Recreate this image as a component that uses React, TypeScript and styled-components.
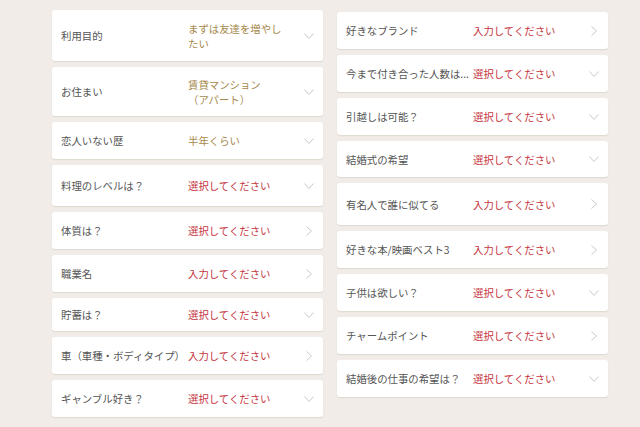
import styled, { createGlobalStyle } from 'styled-components';

type Kind = 'select' | 'input';

interface Item {
  label: string;
  value: React.ReactNode;
  filled?: boolean;
  kind: Kind;
  height: number;
}

const leftItems: Item[] = [
  { label: '利用目的', value: 'まずは友達を増やしたい', filled: true, kind: 'select', height: 51 },
  {
    label: 'お住まい',
    value: (
      <>
        賃貸マンション
        <br />
        （アパート）
      </>
    ),
    filled: true,
    kind: 'select',
    height: 49,
  },
  { label: '恋人いない歴', value: '半年くらい', filled: true, kind: 'select', height: 37 },
  { label: '料理のレベルは？', value: '選択してください', kind: 'select', height: 41 },
  { label: '体質は？', value: '選択してください', kind: 'input', height: 37 },
  { label: '職業名', value: '入力してください', kind: 'input', height: 37 },
  { label: '貯蓄は？', value: '選択してください', kind: 'select', height: 33 },
  { label: '車（車種・ボディタイプ）', value: '入力してください', kind: 'input', height: 37 },
  { label: 'ギャンブル好き？', value: '選択してください', kind: 'select', height: 37 },
];

const rightItems: Item[] = [
  { label: '好きなブランド', value: '入力してください', kind: 'input', height: 37 },
  { label: '今まで付き合った人数は...', value: '選択してください', kind: 'select', height: 37 },
  { label: '引越しは可能？', value: '選択してください', kind: 'select', height: 37 },
  { label: '結婚式の希望', value: '選択してください', kind: 'select', height: 36 },
  { label: '有名人で誰に似てる', value: '入力してください', kind: 'input', height: 42 },
  { label: '好きな本/映画ベスト3', value: '入力してください', kind: 'input', height: 37 },
  { label: '子供は欲しい？', value: '選択してください', kind: 'select', height: 37 },
  { label: 'チャームポイント', value: '選択してください', kind: 'input', height: 37 },
  { label: '結婚後の仕事の希望は？', value: '選択してください', kind: 'select', height: 37 },
];

const Chevron = ({ kind }: { kind: Kind }) =>
  kind === 'select' ? (
    <svg width="10" height="6" viewBox="0 0 10 6">
      <polyline points="0.5,0.5 5,5.5 9.5,0.5" fill="none" stroke="#c8c8c8" strokeWidth="1" />
    </svg>
  ) : (
    <svg width="6" height="10" viewBox="0 0 6 10">
      <polyline points="0.5,0.5 5.5,5 0.5,9.5" fill="none" stroke="#c8c8c8" strokeWidth="1" />
    </svg>
  );

const Column = ({ items, top }: { items: Item[]; top: number }) => (
  <List $top={top}>
    {items.map((item) => (
      <Row key={item.label} $height={item.height}>
        <Label>{item.label}</Label>
        <Value $filled={!!item.filled}>{item.value}</Value>
        <Icon>
          <Chevron kind={item.kind} />
        </Icon>
      </Row>
    ))}
  </List>
);

export default function App() {
  return (
    <>
      <GlobalStyle />
      <Page>
        <Column items={leftItems} top={10} />
        <Column items={rightItems} top={12} />
      </Page>
    </>
  );
}

const GlobalStyle = createGlobalStyle`
  html, body {
    margin: 0;
    padding: 0;
    background: #f1ece7;
  }
  body {
    font-family: 'Noto Sans CJK JP', 'Noto Sans', sans-serif;
    width: 640px;
    height: 427px;
    overflow: hidden;
  }
`;

const Page = styled.main`
  display: flex;
  gap: 14px;
  padding-left: 52px;
  height: 427px;
  overflow: hidden;
`;

const List = styled.div<{ $top: number }>`
  width: 271px;
  display: flex;
  flex-direction: column;
  gap: 6px;
  padding-top: ${(p) => p.$top}px;
`;

const Row = styled.div<{ $height: number }>`
  display: flex;
  align-items: center;
  min-height: ${(p) => p.$height}px;
  box-sizing: border-box;
  padding: 0 9px;
  background: #fff;
  border-radius: 3px;
  box-shadow: 0 1px 1px rgba(90, 70, 50, 0.12);
`;

const Label = styled.span`
  flex: 0 0 127px;
  font-size: 10.4px;
  line-height: 15px;
  color: #555;
  white-space: nowrap;
  overflow: hidden;
  text-overflow: ellipsis;
`;

const Value = styled.span<{ $filled: boolean }>`
  width: 100px;
  font-size: 10.4px;
  line-height: 15px;
  color: ${(p) => (p.$filled ? '#a6884c' : '#c6343e')};
`;

const Icon = styled.span`
  margin-left: auto;
  width: 10px;
  display: flex;
  justify-content: center;
  align-items: center;
`;
